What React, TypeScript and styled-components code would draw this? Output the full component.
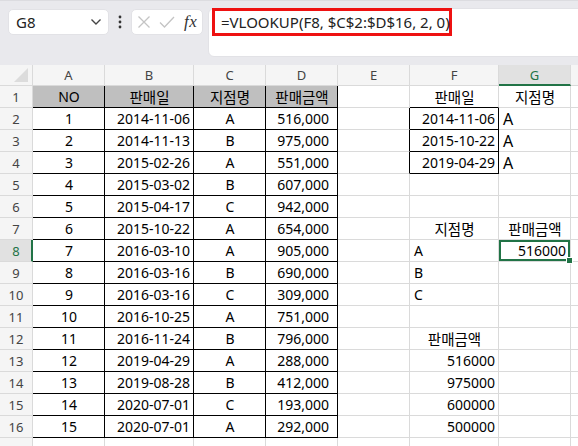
import React from "react";
import styled, { createGlobalStyle, css } from "styled-components";

const GlobalStyle = createGlobalStyle`
  html, body { margin: 0; padding: 0; background: #ffffff; overflow: hidden; }
  body { font-family: "Noto Sans", "Noto Sans CJK KR", sans-serif; }
  #root { width: 578px; height: 446px; overflow: hidden; }
`;

const GREEN = "#217346";
const GRID = "#dadada";

const Page = styled.div`
  width: 578px;
  height: 446px;
  display: flex;
  flex-direction: column;
  overflow: hidden;
`;

const Toolbar = styled.div`
  height: 65px;
  flex: 0 0 65px;
  box-sizing: border-box;
  background: #e9e9ed;
  border-top: 1px solid #dcdce0;
  display: flex;
  align-items: flex-start;
  padding: 7px 0 0 8px;
  overflow: hidden;
`;

const NameBox = styled.div`
  margin-top: 1px;
  width: 101px;
  height: 26px;
  box-sizing: border-box;
  background: #ffffff;
  border: 1px solid #e2e2e6;
  border-radius: 5px;
  display: flex;
  align-items: center;
  justify-content: space-between;
  padding: 0 6px 0 7px;
`;

const NameText = styled.span`
  font-size: 15px;
  color: #222;
`;

const Dots = styled.div`
  width: 22px;
  height: 26px;
  margin-top: 1px;
  display: flex;
  align-items: center;
  justify-content: center;
`;

const FuncBox = styled.div`
  margin-top: 1px;
  width: 72px;
  height: 26px;
  box-sizing: border-box;
  background: #ffffff;
  border: 1px solid #e2e2e6;
  border-radius: 5px;
  display: flex;
  align-items: center;
  padding: 0 4px 0 5px;
  gap: 8px;
`;

const Fx = styled.span`
  font-family: "Liberation Serif", "DejaVu Serif", serif;
  font-style: italic;
  font-size: 17px;
  color: #333;
  margin-left: 1px;
  letter-spacing: 0.5px;
`;

const FormulaBox = styled.div`
  margin-left: 5px;
  flex: 1;
  margin-right: -10px;
  height: 49px;
  box-sizing: border-box;
  background: #ffffff;
  border: 1px solid #e2e2e6;
  border-radius: 6px;
  padding: 0 0 0 3px;
  display: flex;
  align-items: flex-start;
`;

const Highlight = styled.div`
  margin-top: -1px;
  width: 240px;
  height: 28px;
  box-sizing: border-box;
  border: 3px solid #ee1111;
  display: flex;
  align-items: center;
  padding-left: 6px;
  font-size: 15px;
  color: #222;
  white-space: nowrap;
`;

const Grid = styled.div`
  display: grid;
  grid-template-columns: 33px 72px 89px 72px 72px 72px 89px 72px 1fr;
  grid-template-rows: 21px;
  grid-auto-rows: 22px;
  flex: 1;
  overflow: hidden;
`;

const ColHead = styled.div<{ $sel?: boolean; $corner?: boolean }>`
  position: relative;
  box-sizing: border-box;
  background: ${(p) => (p.$sel ? "#e1e1e1" : "#f5f5f5")};
  border-right: 1px solid ${GRID};
  border-bottom: ${(p) => (p.$sel ? `2px solid ${GREEN}` : `1px solid ${GRID}`)};
  display: flex;
  align-items: center;
  justify-content: center;
  font-size: 13px;
  color: ${(p) => (p.$sel ? GREEN : "#444")};
  padding-top: ${(p) => (p.$sel ? "1px" : "0")};
`;

const CornerTri = styled.div`
  position: absolute;
  right: 4px;
  bottom: 3px;
  width: 0;
  height: 0;
  border-left: 14px solid transparent;
  border-bottom: 14px solid #dcdcdc;
`;

const RowHead = styled.div<{ $sel?: boolean }>`
  box-sizing: border-box;
  background: ${(p) => (p.$sel ? "#e1e1e1" : "#f5f5f5")};
  border-right: ${(p) => (p.$sel ? `2px solid ${GREEN}` : `1px solid ${GRID}`)};
  border-bottom: 1px solid ${GRID};
  display: flex;
  align-items: center;
  justify-content: center;
  font-size: 13px;
  color: ${(p) => (p.$sel ? GREEN : "#444")};
  padding-left: ${(p) => (p.$sel ? "1px" : "0")};
`;

type Align = "l" | "c" | "r";

const Cell = styled.div<{
  $align: Align;
  $head?: boolean;
  $bR?: boolean;
  $bB?: boolean;
  $pr?: number;
  $sel?: boolean;
  $big?: boolean;
}>`
  position: relative;
  box-sizing: border-box;
  background: ${(p) => (p.$head ? "#bfbfbf" : "#ffffff")};
  border-right: 1px solid ${(p) => (p.$bR ? "#000" : GRID)};
  border-bottom: 1px solid ${(p) => (p.$bB ? "#000" : GRID)};
  display: flex;
  align-items: center;
  justify-content: ${(p) =>
    p.$align === "l" ? "flex-start" : p.$align === "r" ? "flex-end" : "center"};
  padding: 0 ${(p) => p.$pr ?? 3}px 0 4px;
  font-size: ${(p) => (p.$big ? "16px" : "14px")};
  color: #000;
  white-space: nowrap;
  overflow: visible;
  ${(p) =>
    p.$sel &&
    css`
      box-shadow: inset 0 0 0 2px ${GREEN};
      padding-right: 4px;
      &::after {
        content: "";
        position: absolute;
        right: -3px;
        bottom: -3px;
        width: 5px;
        height: 5px;
        background: ${GREEN};
        border: 1px solid #fff;
        z-index: 2;
      }
    `}
`;

const Kr = styled.span`
  font-size: 14.5px;
`;

type Spec = {
  v?: string;
  a?: Align;
  head?: boolean;
  bR?: boolean;
  bB?: boolean;
  pr?: number;
  sel?: boolean;
  big?: boolean;
};

const table: string[][] = [
  ["NO", "판매일", "지점명", "판매금액"],
  ["1", "2014-11-06", "A", "516,000"],
  ["2", "2014-11-13", "B", "975,000"],
  ["3", "2015-02-26", "A", "551,000"],
  ["4", "2015-03-02", "B", "607,000"],
  ["5", "2015-04-17", "C", "942,000"],
  ["6", "2015-10-22", "A", "654,000"],
  ["7", "2016-03-10", "A", "905,000"],
  ["8", "2016-03-16", "B", "690,000"],
  ["9", "2016-03-16", "C", "309,000"],
  ["10", "2016-10-25", "A", "751,000"],
  ["11", "2016-11-24", "B", "796,000"],
  ["12", "2019-04-29", "A", "288,000"],
  ["13", "2019-08-28", "B", "412,000"],
  ["14", "2020-07-01", "C", "193,000"],
  ["15", "2020-07-01", "A", "292,000"],
];

const side: Record<string, Spec> = {
  "1-5": { v: "판매일", a: "c", bB: true },
  "1-6": { v: "지점명", a: "c" },
  "2-4": { bR: true },
  "3-4": { bR: true },
  "4-4": { bR: true },
  "2-5": { v: "2014-11-06", a: "r", bR: true, bB: true },
  "3-5": { v: "2015-10-22", a: "r", bR: true, bB: true },
  "4-5": { v: "2019-04-29", a: "r", bR: true, bB: true },
  "2-6": { v: "A", a: "l", big: true },
  "3-6": { v: "A", a: "l", big: true },
  "4-6": { v: "A", a: "l", big: true },
  "7-5": { v: "지점명", a: "c" },
  "7-6": { v: "판매금액", a: "c" },
  "8-5": { v: "A", a: "l" },
  "8-6": { v: "516000", a: "r", sel: true },
  "9-5": { v: "B", a: "l" },
  "10-5": { v: "C", a: "l" },
  "12-5": { v: "판매금액", a: "c" },
  "13-5": { v: "516000", a: "r" },
  "14-5": { v: "975000", a: "r" },
  "15-5": { v: "600000", a: "r" },
  "16-5": { v: "500000", a: "r" },
};

const isKorean = (s: string) => /[\uac00-\ud7a3]/.test(s);

function spec(row: number, col: number): Spec {
  if (row <= 16 && col <= 3) {
    const v = table[row - 1][col];
    const head = row === 1;
    let a: Align = "c";
    if (!head && col === 1) a = "r";
    if (!head && col === 3) a = "r";
    return { v, a, head, bR: true, bB: true, pr: !head && col === 3 ? 8 : 3 };
  }
  return side[`${row}-${col}`] ?? {};
}

const COLS = ["A", "B", "C", "D", "E", "F", "G", ""];
const ROWS = Array.from({ length: 17 }, (_, i) => i + 1);

const ChevronIcon = () => (
  <svg width="12" height="8" viewBox="0 0 12 8">
    <path d="M1.5 1.5 L6 6 L10.5 1.5" fill="none" stroke="#444" strokeWidth="1.4" />
  </svg>
);

const DotsIcon = () => (
  <svg width="4" height="14" viewBox="0 0 4 14">
    <circle cx="2" cy="2" r="1.4" fill="#333" />
    <circle cx="2" cy="7" r="1.4" fill="#333" />
    <circle cx="2" cy="12" r="1.4" fill="#333" />
  </svg>
);

const CrossIcon = () => (
  <svg width="14" height="14" viewBox="0 0 14 14">
    <path d="M1.5 1.5 L12.5 12.5 M12.5 1.5 L1.5 12.5" stroke="#c4c4c4" strokeWidth="1.3" fill="none" />
  </svg>
);

const CheckIcon = () => (
  <svg width="16" height="14" viewBox="0 0 16 14">
    <path d="M1 7.5 L5.5 12 L15 2" stroke="#c4c4c4" strokeWidth="1.3" fill="none" />
  </svg>
);

export default function App() {
  return (
    <>
      <GlobalStyle />
      <Page>
        <Toolbar>
          <NameBox>
            <NameText>G8</NameText>
            <ChevronIcon />
          </NameBox>
          <Dots>
            <DotsIcon />
          </Dots>
          <FuncBox>
            <CrossIcon />
            <CheckIcon />
            <Fx>fx</Fx>
          </FuncBox>
          <FormulaBox>
            <Highlight>=VLOOKUP(F8, $C$2:$D$16, 2, 0)</Highlight>
          </FormulaBox>
        </Toolbar>
        <Grid>
          <ColHead $corner>
            <CornerTri />
          </ColHead>
          {COLS.map((c, i) => (
            <ColHead key={`h${i}`} $sel={c === "G"}>
              {c}
            </ColHead>
          ))}
          {ROWS.map((r) => (
            <React.Fragment key={`r${r}`}>
              <RowHead $sel={r === 8}>{r <= 16 ? r : ""}</RowHead>
              {COLS.map((_, ci) => {
                const s = spec(r, ci);
                const v = s.v ?? "";
                return (
                  <Cell
                    key={`c${r}-${ci}`}
                    $align={s.a ?? "l"}
                    $head={s.head}
                    $bR={s.bR}
                    $bB={s.bB}
                    $pr={s.pr}
                    $sel={s.sel}
                    $big={s.big}
                  >
                    {isKorean(v) ? <Kr>{v}</Kr> : v}
                  </Cell>
                );
              })}
            </React.Fragment>
          ))}
        </Grid>
      </Page>
    </>
  );
}
